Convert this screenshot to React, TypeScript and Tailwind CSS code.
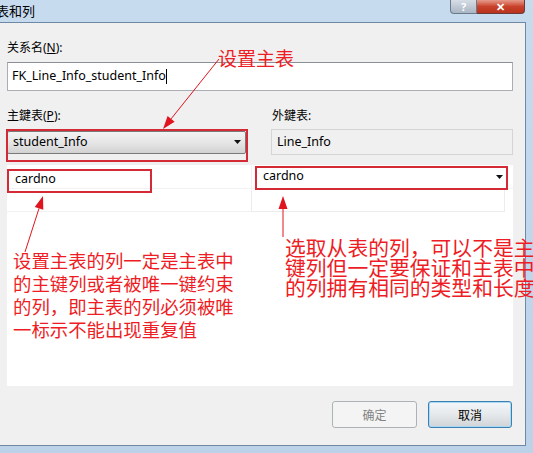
import React from "react";

const ui = "font-['Noto_Sans','Noto_Sans_CJK_SC',sans-serif] text-[12px] text-black";
const note = "font-['Noto_Sans_CJK_SC',sans-serif] text-[#ee1c24]";

const Arrow = ({ x1, y1, x2, y2 }: { x1: number; y1: number; x2: number; y2: number }) => {
  // arrowhead at (x2, y2)
  const a = Math.atan2(y2 - y1, x2 - x1);
  const len = 13;
  const half = 4.5;
  const bx = x2 - len * Math.cos(a);
  const by = y2 - len * Math.sin(a);
  const px = -Math.sin(a) * half;
  const py = Math.cos(a) * half;
  return (
    <g>
      <line x1={x1} y1={y1} x2={bx} y2={by} stroke="#e0141e" strokeWidth={1} />
      <polygon points={`${x2},${y2} ${bx + px},${by + py} ${bx - px},${by - py}`} fill="#e0141e" />
    </g>
  );
};

const Caret = () => (
  <svg width="7" height="4" viewBox="0 0 7 4" className="shrink-0">
    <path d="M0 0h7L3.5 4z" fill="#111" />
  </svg>
);

export default function App() {
  return (
    <div className={`relative w-[533px] h-[453px] overflow-hidden bg-gradient-to-b from-[#c7dbef] to-[#bcd2e9] flex flex-col ${ui}`}>
      {/* title bar */}
      <div className="h-[22px] flex items-start shrink-0">
        <span className="ml-[-4px] mt-[3px] text-[13px] leading-[16px] font-['Noto_Sans_CJK_SC',sans-serif]">表和列</span>
        <div className="ml-auto mr-[8px] flex">
          <div className="w-[27px] h-[14px] rounded-bl-[4px] border border-t-0 border-[#6b7b8c] bg-gradient-to-b from-[#d6dde6] to-[#aab6c4] flex items-center justify-center text-white text-[11px] leading-none font-bold">?</div>
          <div className="w-[48px] h-[14px] rounded-br-[4px] border border-l-0 border-t-0 border-[#6b3a3a] bg-gradient-to-b from-[#e59a8a] via-[#c9412b] to-[#b8321c] flex items-center justify-center text-white text-[11px] leading-none font-bold">✕</div>
        </div>
      </div>

      {/* dialog body */}
      <div className="w-[526px] h-[424px] shrink-0 border-t border-r border-b border-[#6f88a3] bg-[#f0f0f0] flex flex-col pl-[7px] pr-[12px]">
        <div className="mt-[17px] h-[16px] leading-[16px]">
          关系名(<span className="underline">N</span>):
        </div>
        <div className="mt-[6px] h-[29px] bg-white border border-[#abadb3] border-t-[#8a8e98] flex items-center pl-[4px] text-[12.5px]">
          FK_Line_Info_student_Info<span className="w-px h-[15px] bg-black" />
        </div>

        <div className="mt-[17px] h-[16px] leading-[16px] flex">
          <span className="w-[265px]">
            主鍵表(<span className="underline">P</span>):
          </span>
          <span>外鍵表:</span>
        </div>

        <div className="mt-[5px] h-[26px] flex items-center">
          <div className="w-[239px] h-[23px] rounded-[2px] border border-[#7a7a7a] bg-gradient-to-b from-[#f3f3f3] via-[#e6e6e6] to-[#d2d2d2] flex items-center pl-[5px] pr-[4px] text-[12.5px]">
            <span className="flex-1">student_Info</span>
            <Caret />
          </div>
          <div className="ml-[25px] w-[242px] h-[26px] border border-[#d5d5d5] bg-[#f0f0f0] flex items-center pl-[5px] text-[12.5px]">
            Line_Info
          </div>
        </div>

        {/* column grid */}
        <div className="mt-[10px] h-[221px] bg-white flex items-start">
          <div className="w-[244px] flex flex-col">
            <div className="h-[24px] border-b border-[#f2f2f2] flex items-center pl-[8px] pt-[6px] text-[12.5px]">cardno</div>
            <div className="h-[23px] border-b border-[#f2f2f2]" />
          </div>
          <div className="flex-1 flex flex-col">
            <div className="h-[24px] border-b border-l border-[#f2f2f2] flex items-center pl-[11px] pr-[10px] text-[12.5px]">
              <span className="flex-1">cardno</span>
              <Caret />
            </div>
            <div className="h-[23px] w-[254px] border-b border-r border-l border-[#ececec]" />
          </div>
        </div>

        {/* buttons */}
        <div className="mt-[15px] mr-[1px] flex justify-end gap-[11px]">
          <button className="w-[85px] h-[27px] rounded-[3px] border border-[#adb2b5] bg-[#f4f4f4] text-[#838383] font-['Noto_Sans_CJK_SC',sans-serif]">确定</button>
          <button className="w-[84px] h-[27px] rounded-[3px] border border-[#3c7fb1] bg-gradient-to-b from-[#f4f7f9] via-[#e6e9eb] to-[#d0d4d6] shadow-[inset_0_0_0_1px_#a8d9f5] font-['Noto_Sans_CJK_SC',sans-serif]">取消</button>
        </div>
      </div>

      {/* annotations */}
      <div className="absolute left-[6px] top-[129px] w-[242px] h-[33px] border-2 border-[#d42a36]" />
      <div className="absolute left-[7px] top-[169px] w-[145px] h-[24px] border-2 border-[#d42a36]" />
      <div className="absolute left-[255px] top-[166px] w-[253px] h-[24px] border-2 border-[#d42a36]" />

      <div className={`absolute left-[218px] top-[48px] text-[19px] leading-[19px] ${note}`}>设置主表</div>
      <div className={`absolute left-[13px] top-[249px] text-[18.4px] leading-[23px] whitespace-nowrap ${note}`}>
        设置主表的列一定是主表中
        <br />
        的主键列或者被唯一键约束
        <br />
        的列，即主表的列必须被唯
        <br />
        一标示不能出现重复值
      </div>
      <div className={`absolute left-[285px] top-[237px] text-[20.8px] leading-[20px] whitespace-nowrap ${note}`}>
        选取从表的列，可以不是主
        <br />
        键列但一定要保证和主表中
        <br />
        的列拥有相同的类型和长度
      </div>

      <svg className="absolute inset-0 pointer-events-none" width="533" height="453">
        <Arrow x1={219} y1={59} x2={163} y2={129} />
        <Arrow x1={25} y1={252} x2={43} y2={196} />
        <Arrow x1={283} y1={237} x2={283} y2={196} />
      </svg>
    </div>
  );
}
